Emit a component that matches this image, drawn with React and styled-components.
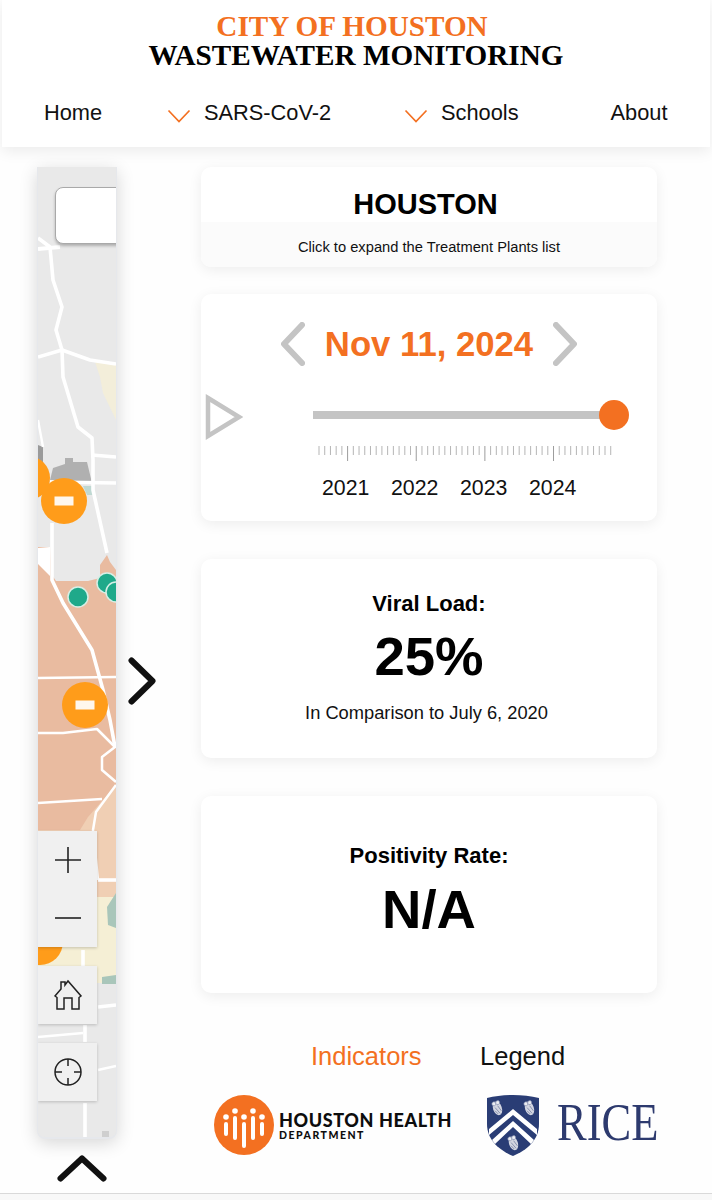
import React from 'react';
import styled, { createGlobalStyle } from 'styled-components';

const GlobalStyle = createGlobalStyle`
  html, body {
    margin: 0;
    padding: 0;
    background: #fefefe;
    font-family: "Liberation Sans", Arial, sans-serif;
    color: #000;
  }
  * { box-sizing: border-box; }
`;

const Page = styled.div`
  width: 712px;
  height: 1200px;
  overflow: hidden;
  background: #fefefe;
  position: relative;
`;

const Header = styled.header`
  margin: 0 2px;
  height: 147px;
  background: #fff;
  box-shadow: 0 4px 14px rgba(0, 0, 0, 0.08);
  padding-top: 12px;
`;

const Title = styled.h1`
  margin: 0;
  text-align: center;
  font-family: "Liberation Serif", "Times New Roman", serif;
  font-weight: 700;
  font-size: 29.2px;
  line-height: 29px;
  padding-right: ${p => (p.$accent ? 8 : 0)}px;
  color: ${p => (p.$accent ? '#f37021' : '#000')};
`;

const Nav = styled.nav`
  display: grid;
  grid-template-columns: 122.5px 237px 207px auto;
  align-items: center;
  margin-top: 28px;
  padding: 0 0 0 42px;
  height: 30px;
`;

const NavItem = styled.div`
  display: flex;
  align-items: center;
  gap: 13.5px;
  font-size: 21.8px;
  color: #111;
`;

const Main = styled.main`
  display: flex;
  padding: 20px 0 0 37px;
`;

const LeftColumn = styled.div`
  width: 164px;
  flex: none;
  display: flex;
  flex-direction: column;
`;

const MapRow = styled.div`
  display: flex;
  align-items: center;
  gap: 11px;
`;

const MapFrame = styled.div`
  position: relative;
  flex: none;
  width: 80px;
  height: 972px;
  border: solid #e6e8ec;
  border-width: 0 1px 2px 1px;
  border-radius: 0 0 8px 8px;
  background: #e9e9e9;
  overflow: hidden;
  box-shadow: 0 4px 18px rgba(0, 0, 0, 0.16);
`;

const MapCanvas = styled.svg`
  display: block;
  width: 78px;
  height: 970px;
`;

const SearchBox = styled.div`
  position: absolute;
  top: 20px;
  left: 17px;
  width: 72px;
  height: 57px;
  background: #fff;
  border: 1px solid #a9a9a9;
  border-radius: 8px;
  box-shadow: 0 2px 3px rgba(0, 0, 0, 0.25);
`;

const MapButton = styled.div`
  position: absolute;
  left: 0;
  top: ${p => p.$top}px;
  width: 59px;
  height: ${p => p.$height || 58}px;
  background: #f0f0f0;
  box-shadow: 0 1px 3px rgba(0, 0, 0, 0.2);
  display: flex;
  flex-direction: column;
  align-items: center;
  justify-content: space-around;
  color: #222;
`;

const Expand = styled.svg`
  flex: none;
  margin-top: 56px;
`;

const Collapse = styled.svg`
  margin: 16px 0 0 20px;
`;

const RightColumn = styled.div`
  width: 456px;
  display: flex;
  flex-direction: column;
`;

const Card = styled.section`
  background: #fff;
  border-radius: 10px;
  box-shadow: 0 3px 14px rgba(0, 0, 0, 0.07);
  height: ${p => p.$height}px;
  margin-bottom: ${p => p.$gap}px;
  display: flex;
  flex-direction: column;
  align-items: center;
`;

const PlantsTitle = styled.div`
  height: 55px;
  width: 100%;
  text-align: center;
  padding: 20px 7px 0 0;
  font-size: 29px;
  line-height: 34px;
  font-weight: 700;
`;

const PlantsHint = styled.div`
  flex: 1;
  width: 100%;
  background: #fbfbfb;
  border-radius: 0 0 10px 10px;
  text-align: center;
  font-size: 14.7px;
  padding-top: 17px;
  line-height: 17px;
  color: #111;
`;

const DateRow = styled.div`
  display: flex;
  align-items: center;
  height: 44px;
  margin-top: 28px;
  gap: 20px;
`;

const DateText = styled.div`
  font-size: 34.7px;
  font-weight: 700;
  color: #f37021;
`;

const SliderRow = styled.div`
  display: flex;
  width: 100%;
  align-items: flex-start;
  padding: 28px 0 0 4px;
`;

const PlayIcon = styled.svg`
  flex: none;
`;

const SliderBlock = styled.div`
  margin-left: 70px;
  width: 320px;
`;

const Track = styled.div`
  position: relative;
  height: 8px;
  width: 301px;
  margin-top: 17px;
  background: #c4c4c4;
`;

const Thumb = styled.div`
  position: absolute;
  right: -15px;
  top: -11px;
  width: 30px;
  height: 30px;
  border-radius: 50%;
  background: #f37021;
`;

const Ticks = styled.svg`
  display: block;
  margin-top: 27px;
`;

const Years = styled.div`
  display: flex;
  padding-left: 9px;
  margin-top: 13px;
`;

const Year = styled.div`
  width: 69px;
  font-size: 21.3px;
  line-height: 26px;
  color: #111;
`;

const MetricLabel = styled.div`
  font-size: 22px;
  font-weight: 700;
  line-height: 26px;
  margin-top: ${p => p.$top}px;
`;

const MetricValue = styled.div`
  font-size: 54.5px;
  font-weight: 700;
  line-height: 62px;
  margin-top: ${p => p.$top || 0}px;
`;

const MetricNote = styled.div`
  font-size: 18.3px;
  line-height: 22px;
  margin-top: 14px;
  padding-right: 5px;
  color: #111;
`;

const Tabs = styled.div`
  display: flex;
  margin: 48px 0 0 110px;
  gap: 58.5px;
  font-size: 25.5px;
  line-height: 30px;
`;

const Tab = styled.div`
  color: ${p => (p.$active ? '#f37021' : '#111')};
`;

const Logos = styled.div`
  display: flex;
  align-items: center;
  margin: 22px 0 0 13px;
  height: 64px;
`;

const HealthText = styled.div`
  flex: none;
  margin-left: 5px;
  width: 174px;
  font-family: Lato, "Liberation Sans", sans-serif;
  font-weight: 900;
`;

const HealthName = styled.div`
  font-size: 18px;
  line-height: 20px;
  letter-spacing: 0.6px;
  white-space: nowrap;
  color: #0d0d0d;
`;

const HealthDept = styled.div`
  font-size: 10.5px;
  line-height: 11px;
  letter-spacing: 1.5px;
  color: #0d0d0d;
`;

const RiceShield = styled.svg`
  flex: none;
  margin-left: 34px;
`;

const RiceWord = styled.div`
  font-family: "Liberation Serif", "Times New Roman", serif;
  font-size: 53px;
  line-height: 60px;
  color: #2d3a6e;
  margin: -6px 0 0 18px;
  transform: scaleX(0.84);
  transform-origin: left center;
`;

const BottomBar = styled.div`
  position: absolute;
  left: 0;
  right: 0;
  bottom: 0;
  height: 7px;
  background: #f8f8f8;
  border-top: 1px solid #d9d9d9;
`;

const Chevron = ({ dir }) => (
  <svg width="24" height="44" viewBox="0 0 24 44" fill="none" stroke="#c4c4c4" strokeWidth="6" strokeLinecap="round" strokeLinejoin="round">
    <path d={dir === 'left' ? 'M21 3 L3 22 L21 41' : 'M3 3 L21 22 L3 41'} />
  </svg>
);

const NavChevron = () => (
  <svg width="24" height="14" viewBox="0 0 24 14" fill="none" stroke="#f37021" strokeWidth="1.7" style={{ marginTop: 6 }}>
    <path d="M1.5 1.5 L12 12.5 L22.5 1.5" />
  </svg>
);

const Cluster = ({ x, y }) => (
  <g>
    <circle cx={x} cy={y} r="23" fill="#ff9c1a" />
    <rect x={x - 9.5} y={y - 4.5} width="19" height="9" fill="#fff" opacity="0.92" />
  </g>
);

const road = { fill: 'none', stroke: '#fff', strokeWidth: 3.6, strokeLinejoin: 'round' };
const thinRoad = { ...road, strokeWidth: 2.4 };

// map is traced in screenshot coordinates, so the viewBox starts at the frame corner
const HoustonMap = () => (
  <MapCanvas viewBox="38 167 78 970" preserveAspectRatio="none">
    <rect x="38" y="167" width="80" height="972" fill="#e9e9e9" />
    <path d="M95 362 L116 365 L116 420 L103 393 L100 377 Z" fill="#f3eeda" />
    <path d="M53 468 L65 464 L65 458 L73 458 L73 462 L87 462 L92 483 L50 480 Z" fill="#b0b0b0" />
    <path d="M38 445 L43 447 L43 478 L38 478 Z" fill="#9a9a9a" />
    <path d="M83 486 L92 486 L94 495 L87 495 Z" fill="#bfd8d2" />
    <path d="M38 547 L50 547 L52 575 L56 581 L88 581 L100 578 L100 565 L107 555 L110 562 L116 570 L116 830 L38 830 L38 560 Z" fill="#e9bba0" />
    <path d="M38 548 L50 547 L50 576 L38 564 Z" fill="#fff" />
    <path d="M88 817 L116 785 L116 900 L38 900 L38 830 L80 830 Z" fill="#f0cfb4" />
    <path d="M38 897 L116 897 L116 983 L38 983 Z" fill="#f5efd5" />
    <path d="M107 907 L116 893 L116 928 L108 925 Z" fill="#a9c6ba" />
    <path d="M102 977 L116 975 L116 984 L102 984 Z" fill="#a9c6ba" />
    <path d="M38 238 L50 247 L53 280 L62 307 L56 330 L62 350 L63 377 L78 427 L92 438 L93 460 L93 490 L107 553" {...road} />
    <path d="M38 249 L60 247" {...road} strokeWidth="4" />
    <path d="M38 357 L62 350 L90 360 L116 364" {...road} />
    <path d="M92 455 L116 457" {...road} />
    <path d="M50 482 L116 483" {...road} />
    <path d="M38 420 L43 447" {...thinRoad} />
    <path d="M52 523 L52 580 L63 603 L92 650 L103 690 L110 720 L115 747" {...road} />
    <path d="M38 678 L116 677" {...road} strokeWidth="2.5" />
    <path d="M38 733 L63 733 L97 729 L115 747 L102 757 L102 770 L116 782" {...road} strokeWidth="2.5" />
    <path d="M38 803 L102 799" {...road} strokeWidth="2.5" />
    <path d="M116 785 L96 812 L93 830 L98 880" {...road} strokeWidth="2.5" />
    <path d="M98 880 L116 880" {...road} />
    <path d="M83 950 L83 983" {...road} />
    <path d="M98 1007 L116 1005" {...road} />
    <path d="M38 1037 L83 1033" {...thinRoad} />
    <path d="M85 1025 L85 1042" {...road} />
    <path d="M98 1070 L116 1066" {...thinRoad} />
    <path d="M85 1103 L85 1139" {...road} />
    <rect x="102" y="1131" width="7" height="7" fill="#cfcfcf" />
    <circle cx="78" cy="597" r="10" fill="#1fa98a" stroke="#d6efe6" strokeWidth="1.5" />
    <circle cx="107" cy="583" r="10" fill="#1fa98a" stroke="#d6efe6" strokeWidth="1.5" />
    <circle cx="116" cy="592" r="10" fill="#1fa98a" stroke="#d6efe6" strokeWidth="1.5" />
    <circle cx="28" cy="478" r="22" fill="#ff9c1a" />
    <Cluster x={64} y={501} />
    <Cluster x={85} y={705} />
    <circle cx="40" cy="942" r="23" fill="#ff9c1a" />
  </MapCanvas>
);

const TickScale = () => {
  const ticks = [];
  for (let i = 0; i < 52; i++) {
    const x = 6 + i * 5.72;
    const major = i % 12 === 5;
    ticks.push(
      <line key={i} x1={x} x2={x} y1={0} y2={major ? 15 : 9} stroke={major ? '#9c9c9c' : '#b5b5b5'} strokeWidth="1" />
    );
  }
  return (
    <Ticks width="310" height="16">
      {ticks}
    </Ticks>
  );
};

const Owl = ({ x, y }) => (
  <g transform={`translate(${x} ${y}) rotate(-18)`}>
    <ellipse cx="0" cy="1.5" rx="4.4" ry="7" fill="#d3d6e1" />
    <circle cx="-2" cy="-4" r="2" fill="#eceef3" stroke="#7c86a8" strokeWidth="0.6" />
    <circle cx="2" cy="-4" r="2" fill="#eceef3" stroke="#7c86a8" strokeWidth="0.6" />
    <path d="M-2 0 L1 7 M1 -1 L3 5 M-3 3 L-1 7" stroke="#8089aa" strokeWidth="0.8" />
  </g>
);

const Shield = () => (
  <RiceShield width="52" height="62" viewBox="0 0 52 62">
    <path d="M0 4 C16 0 36 0 52 4 L52 30 C52 46 40 56 26 62 C12 56 0 46 0 30 Z" fill="#2a3d75" />
    <path d="M2 35 L26 15 L50 35 L50 41 L26 21 L2 41 Z" fill="#fff" />
    <path d="M5 46 L26 27 L47 46 L44 50 L26 33 L8 50 Z" fill="#fff" />
    <Owl x={10} y={13} />
    <Owl x={42} y={13} />
    <Owl x={26} y={48} />
  </RiceShield>
);

const HealthMark = () => (
  <svg width="60" height="60" viewBox="0 0 60 60" style={{ flex: 'none' }}>
    <circle cx="30" cy="30" r="30" fill="#f37021" />
    <g fill="#fff">
      <circle cx="12" cy="22" r="2.8" />
      <rect x="10" y="27" width="4" height="14" rx="2" />
      <circle cx="21" cy="16" r="2.8" />
      <rect x="19" y="21" width="4" height="24" rx="2" />
      <circle cx="30" cy="22" r="2.8" />
      <rect x="28" y="27" width="4" height="26" rx="2" />
      <circle cx="39" cy="16" r="2.8" />
      <rect x="37" y="21" width="4" height="24" rx="2" />
      <circle cx="48" cy="22" r="2.8" />
      <rect x="46" y="27" width="4" height="14" rx="2" />
    </g>
  </svg>
);

export default function App() {
  return (
    <Page>
      <GlobalStyle />
      <Header>
        <Title $accent>CITY OF HOUSTON</Title>
        <Title>WASTEWATER MONITORING</Title>
        <Nav>
          <NavItem>Home</NavItem>
          <NavItem><NavChevron />SARS-CoV-2</NavItem>
          <NavItem><NavChevron />Schools</NavItem>
          <NavItem>About</NavItem>
        </Nav>
      </Header>
      <Main>
        <LeftColumn>
          <MapRow>
            <MapFrame>
              <HoustonMap />
              <SearchBox />
              <MapButton $top={664} $height={116}>
                <svg width="30" height="30" viewBox="0 0 30 30" stroke="currentColor" strokeWidth="1.6"><path d="M15 2 V28 M2 15 H28" /></svg>
                <svg width="30" height="30" viewBox="0 0 30 30" stroke="currentColor" strokeWidth="1.6"><path d="M2 15 H28" /></svg>
              </MapButton>
              <MapButton $top={799}>
                <svg width="30" height="32" viewBox="0 0 30 32" fill="none" stroke="currentColor" strokeWidth="1.5" strokeLinejoin="miter">
                  <path d="M2 17 L8 10 V3 H12 V6 L15 2 L28 17 L26 18.5 V30 H19 V19 H11 V30 H4 V18.5 Z" />
                </svg>
              </MapButton>
              <MapButton $top={876}>
                <svg width="30" height="30" viewBox="0 0 30 30" fill="none" stroke="currentColor" strokeWidth="1.5">
                  <circle cx="15" cy="15" r="13" />
                  <path d="M15 2 V9 M15 21 V28 M2 15 H9 M21 15 H28" />
                </svg>
              </MapButton>
            </MapFrame>
            <Expand width="28" height="48" viewBox="0 0 28 48" fill="none" stroke="#111" strokeWidth="6" strokeLinecap="round" strokeLinejoin="round">
              <path d="M3.5 3.5 L24.5 24 L3.5 44.5" />
            </Expand>
          </MapRow>
          <Collapse width="50" height="27" viewBox="0 0 50 27" fill="none" stroke="#111" strokeWidth="6" strokeLinecap="round" strokeLinejoin="round">
            <path d="M3.5 23.5 L25 3.5 L46.5 23.5" />
          </Collapse>
        </LeftColumn>
        <RightColumn>
          <Card $height={100} $gap={27}>
            <PlantsTitle>HOUSTON</PlantsTitle>
            <PlantsHint>Click to expand the Treatment Plants list</PlantsHint>
          </Card>
          <Card $height={227} $gap={38}>
            <DateRow>
              <Chevron dir="left" />
              <DateText>Nov 11, 2024</DateText>
              <Chevron dir="right" />
            </DateRow>
            <SliderRow>
              <PlayIcon width="38" height="46" viewBox="0 0 38 46" fill="none" stroke="#c4c4c4" strokeWidth="4.5">
                <path d="M3 4 L34 23 L3 42 Z" />
              </PlayIcon>
              <SliderBlock>
                <Track><Thumb /></Track>
                <TickScale />
                <Years>
                  <Year>2021</Year>
                  <Year>2022</Year>
                  <Year>2023</Year>
                  <Year>2024</Year>
                </Years>
              </SliderBlock>
            </SliderRow>
          </Card>
          <Card $height={199} $gap={38}>
            <MetricLabel $top={32}>Viral Load:</MetricLabel>
            <MetricValue $top={9}>25%</MetricValue>
            <MetricNote>In Comparison to July 6, 2020</MetricNote>
          </Card>
          <Card $height={197} $gap={0}>
            <MetricLabel $top={47}>Positivity Rate:</MetricLabel>
            <MetricValue $top={10}>N/A</MetricValue>
          </Card>
          <Tabs>
            <Tab $active>Indicators</Tab>
            <Tab>Legend</Tab>
          </Tabs>
          <Logos>
            <HealthMark />
            <HealthText>
              <HealthName>HOUSTON HEALTH</HealthName>
              <HealthDept>DEPARTMENT</HealthDept>
            </HealthText>
            <Shield />
            <RiceWord>RICE</RiceWord>
          </Logos>
        </RightColumn>
      </Main>
      <BottomBar />
    </Page>
  );
}
